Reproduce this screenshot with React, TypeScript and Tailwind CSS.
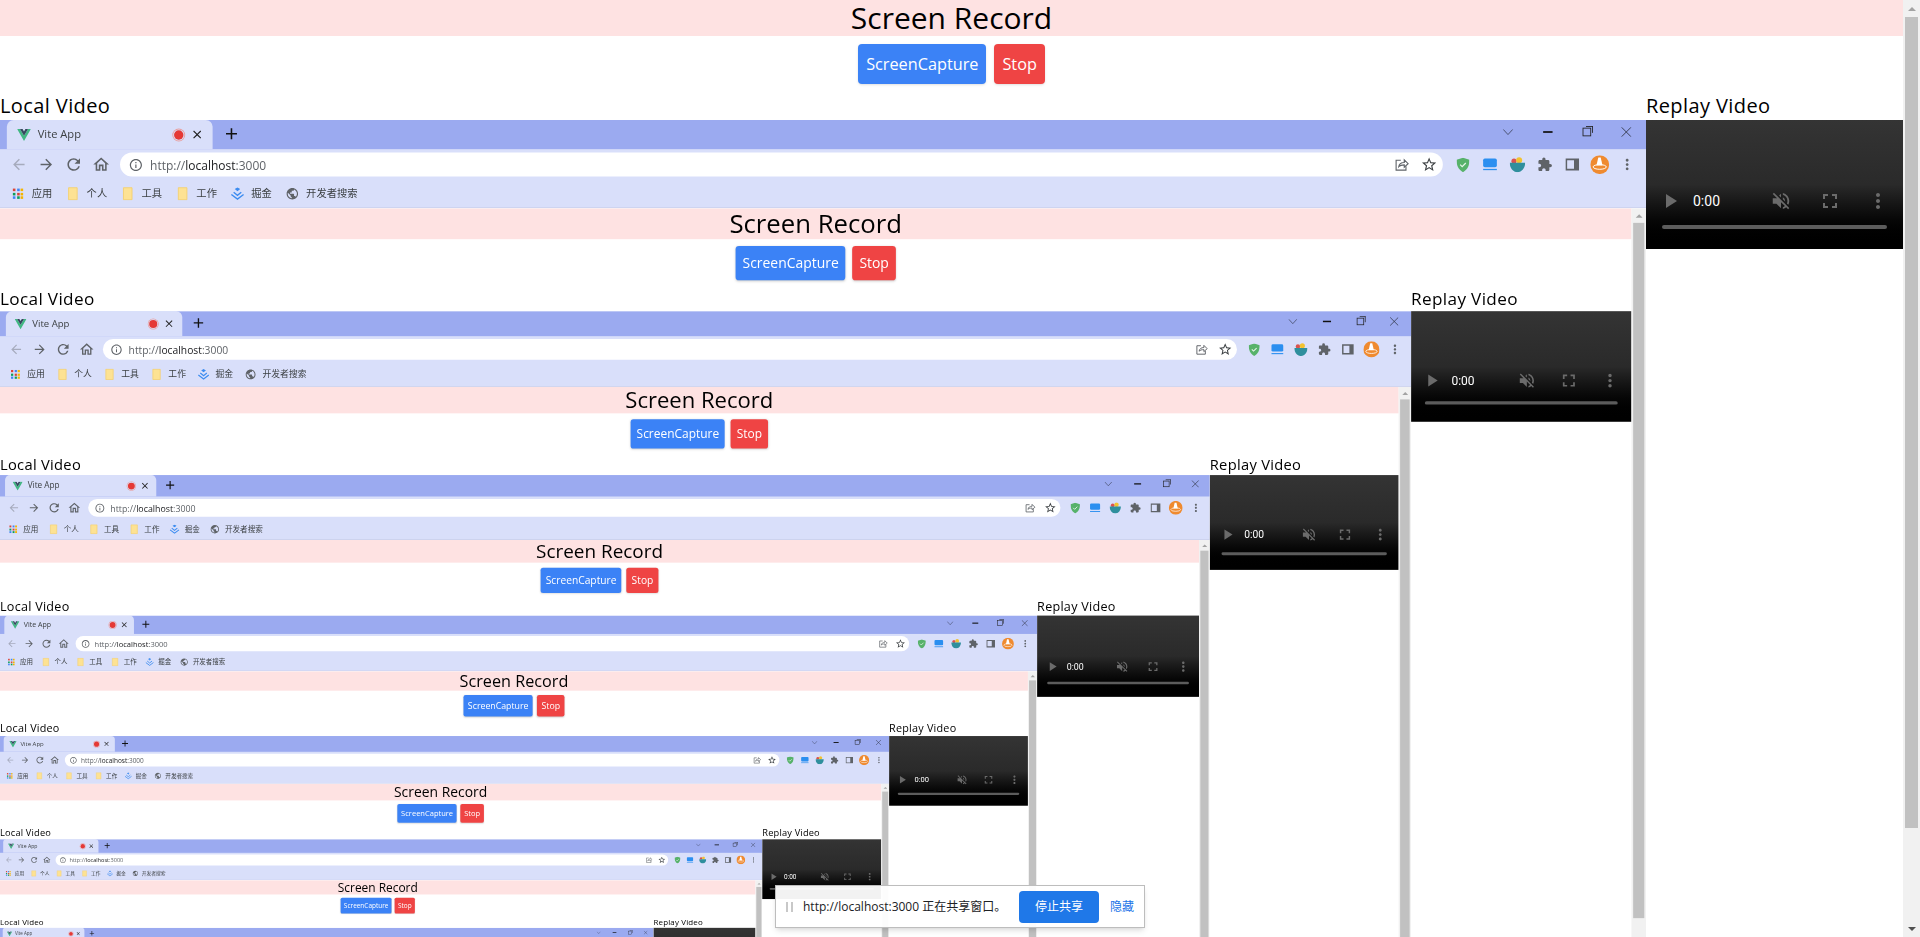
import {
  MdArrowBack,
  MdArrowForward,
  MdRefresh,
  MdOutlineHome,
  MdInfoOutline,
  MdStarBorder,
  MdExtension,
  MdPublic,
  MdPlayArrow,
  MdVolumeOff,
  MdFullscreen,
  MdMoreVert,
  MdClose,
  MdAdd,
} from 'react-icons/md';

const MAX_DEPTH = 8;

const VueLogo = () => (
  <svg viewBox="0 0 24 21" className="w-4 h-[15px]">
    <path d="M0 0h5l7 12L19 0h5L12 21z" fill="#41b883" />
    <path d="M5 0h4.500l2.500 4.500L14.500 0H19l-7 12z" fill="#35495e" />
  </svg>
);

const ShareIcon = () => (
  <svg viewBox="0 0 18 18" className="w-[18px] h-[18px]" fill="none" stroke="#5f6368" strokeWidth="1.3">
    <path d="M8 4H2.500v11.500H14V11" />
    <path d="M5.500 11.500c.5-3.500 3-5 6.500-5V3.500l4.500 4.500-4.500 4V9.300c-3 0-5 .6-6.500 2.200z" />
  </svg>
);

const ShieldIcon = () => (
  <svg viewBox="0 0 16 18" className="w-[15px] h-[17px]">
    <path d="M8 0l8 2.500c0 7-2 12-8 15.500C2 14.500 0 9.500 0 2.500z" fill="#57b26a" />
    <path d="M4.500 8.500l2.500 2.500 4.500-4.500" fill="none" stroke="#e6f5e9" strokeWidth="1.500" />
  </svg>
);

const TabsIcon = () => (
  <svg viewBox="0 0 18 16" className="w-[18px] h-4">
    <rect x="1" y="1" width="16" height="10" rx="2" fill="#2b8ff0" />
    <rect x="1" y="13" width="16" height="1.500" fill="#2b8ff0" />
  </svg>
);

const BowlIcon = () => (
  <svg viewBox="0 0 18 18" className="w-[18px] h-[18px]">
    <circle cx="5" cy="5" r="3" fill="#d9534f" />
    <circle cx="11" cy="4" r="3.500" fill="#f2c230" />
    <path d="M0 7h18c0 6-4 11-9 11S0 13 0 7z" fill="#2f8f9d" />
  </svg>
);

const SidebarIcon = () => (
  <svg viewBox="0 0 16 16" className="w-4 h-4">
    <path d="M0 1h16v14H0z" fill="#5f6368" />
    <path d="M2 3h8v10H2z" fill="#d9dffa" />
  </svg>
);

const AvatarIcon = () => (
  <svg viewBox="0 0 20 20" className="w-[22px] h-[22px]">
    <circle cx="10" cy="10" r="10" fill="#ef8a2f" />
    <path d="M8.500 2.500h2.500l2 8.500H6.500z" fill="#fff" />
    <ellipse cx="10" cy="12.500" rx="7" ry="2.500" fill="none" stroke="#fff" strokeWidth="1" />
  </svg>
);

const FolderIcon = () => (
  <svg viewBox="0 0 12 16" className="w-4 h-4">
    <path d="M1 1h10v14H1z" fill="#fde293" stroke="#f5cf6b" strokeWidth="1" />
  </svg>
);

const AppsIcon = () => (
  <div className="grid grid-cols-3 gap-[1.5px] w-3 h-3 mx-0.5">
    {['#db4437', '#4285f4', '#f4b400', '#0f9d58', '#db4437', '#f4b400', '#4285f4', '#0f9d58', '#f4b400'].map(
      (color, i) => (
        <span key={i} className="w-[3px] h-[3px]" style={{ backgroundColor: color }} />
      ),
    )}
  </div>
);

const JuejinIcon = () => (
  <svg viewBox="0 0 18 16" className="w-4 h-4" fill="none" stroke="#3c8cf0" strokeWidth="1.800">
    <path d="M7 2l2-1.200L11 2 9 3.500z" fill="#3c8cf0" />
    <path d="M4 6l5 4 5-4" />
    <path d="M1 9l8 6 8-6" />
  </svg>
);

const Bookmark = ({ icon, label }: { icon: React.ReactNode; label: string }) => (
  <div className="flex items-center gap-2 text-[12px] text-[#3c4043]">
    {icon}
    <span>{label}</span>
  </div>
);

const ToolButton = ({ children }: { children: React.ReactNode }) => (
  <div className="w-8 h-7 flex items-center justify-center shrink-0">{children}</div>
);

const BrowserChrome = () => (
  <div className="h-[103px] bg-[#d9dffa] border-b border-[#c5cbe8] font-['Open_Sans','Noto_Sans_CJK_SC',sans-serif]">
    <div className="h-[34px] bg-[#9baaf0] flex">
      <div className="ml-2 w-[240px] h-[34px] bg-[#d9dffa] rounded-t-lg flex items-center pl-3 pr-2.5">
        <VueLogo />
        <span className="ml-2 text-[13px] text-[#3c4043]">Vite App</span>
        <span className="ml-auto w-[11px] h-[11px] rounded-full bg-[#e53935] ring-1 ring-offset-1 ring-[#e9a0a0] ring-offset-[#d9dffa] mr-2" />
        <MdClose className="w-4 h-4 text-[#222]" />
      </div>
      <div className="ml-2 w-7 h-8 flex items-center justify-center">
        <MdAdd className="w-[22px] h-[22px] text-[#111]" />
      </div>
      <div className="ml-auto flex h-7">
        <div className="w-[46px] flex items-center justify-center">
          <svg viewBox="0 0 12 8" className="w-3 h-2" fill="none" stroke="#3f4660" strokeWidth="1">
            <path d="M.5 1L6 7l5.500-6" />
          </svg>
        </div>
        <div className="w-[46px] flex items-center justify-center">
          <span className="w-[11px] h-[1.500px] bg-[#111]" />
        </div>
        <div className="w-[46px] flex items-center justify-center">
          <span className="relative w-2.5 h-2.5 border border-[#222]">
            <span className="absolute -top-[3px] -right-[3px] w-2 h-2 border-t border-r border-[#222]" />
          </span>
        </div>
        <div className="w-[46px] flex items-center justify-center">
          <svg viewBox="0 0 12 12" className="w-3 h-3" fill="none" stroke="#2c3140" strokeWidth="1">
            <path d="M.5.5l11 11M11.500.5l-11 11" />
          </svg>
        </div>
      </div>
    </div>
    <div className="h-[38px] flex items-center px-1.5 pb-0.5">
      <ToolButton><MdArrowBack className="w-5 h-5 text-[#a6abbd]" /></ToolButton>
      <ToolButton><MdArrowForward className="w-5 h-5 text-[#5f6368]" /></ToolButton>
      <ToolButton><MdRefresh className="w-[22px] h-[22px] text-[#5f6368]" /></ToolButton>
      <ToolButton><MdOutlineHome className="w-[22px] h-[22px] text-[#5f6368]" /></ToolButton>
      <div className="ml-1.5 mr-[7px] flex-1 h-7 bg-white rounded-full flex items-center pl-2.5 pr-1.5">
        <MdInfoOutline className="w-[17px] h-[17px] text-[#5f6368]" />
        <span className="ml-2 text-[14px] text-[#202124]">
          <span className="text-[#5f6368]">http://</span>localhost<span className="text-[#5f6368]">:3000</span>
        </span>
        <div className="ml-auto flex items-center gap-[13px]">
          <ShareIcon />
          <MdStarBorder className="w-5 h-5 text-[#3c4043]" />
        </div>
      </div>
      <ToolButton><ShieldIcon /></ToolButton>
      <ToolButton><TabsIcon /></ToolButton>
      <ToolButton><BowlIcon /></ToolButton>
      <ToolButton><MdExtension className="w-[18px] h-[18px] text-[#5f6368]" /></ToolButton>
      <ToolButton><SidebarIcon /></ToolButton>
      <ToolButton><AvatarIcon /></ToolButton>
      <ToolButton><MdMoreVert className="w-5 h-5 text-[#5f6368]" /></ToolButton>
    </div>
    <div className="h-[30px] flex items-center gap-4 pl-[13px] pb-0.5">
      <Bookmark icon={<AppsIcon />} label="应用" />
      <Bookmark icon={<FolderIcon />} label="个人" />
      <Bookmark icon={<FolderIcon />} label="工具" />
      <Bookmark icon={<FolderIcon />} label="工作" />
      <Bookmark icon={<JuejinIcon />} label="掘金" />
      <Bookmark icon={<MdPublic className="w-4 h-4 text-[#5f6368]" />} label="开发者搜索" />
    </div>
  </div>
);

const ReplayPlayer = () => (
  <div className="w-[257px] h-[129px] bg-gradient-to-b from-[#343434] via-[#2a2a2a] to-black flex flex-col justify-end px-2 pb-5 font-['Roboto',sans-serif]">
    <div className="flex items-center h-8 text-[#6b6b6b]">
      <MdPlayArrow className="w-6 h-6 ml-1" />
      <span className="ml-[11px] text-[14px] text-white">0:00</span>
      <MdVolumeOff className="w-[22px] h-[22px] ml-[50px]" />
      <MdFullscreen className="w-6 h-6 ml-[26px]" />
      <MdMoreVert className="w-6 h-6 ml-6" />
    </div>
    <div className="mx-2 mt-2 h-1 rounded-full bg-[#5c5c5c]" />
  </div>
);

const Scrollbar = () => (
  <div className="w-[17px] h-full bg-[#f1f1f1] flex flex-col shrink-0">
    <div className="h-[17px] flex items-center justify-center">
      <span className="w-0 h-0 border-x-[4px] border-x-transparent border-b-[4px] border-b-[#a3a3a3]" />
    </div>
    <div className="ml-0.5 w-[13px] h-[811px] bg-[#c1c1c1]" />
    <div className="mt-auto h-[17px] flex items-center justify-center">
      <span className="w-0 h-0 border-x-[4px] border-x-transparent border-t-[4px] border-t-[#505050]" />
    </div>
  </div>
);

const Page = ({ depth }: { depth: number }) => (
  <div className="w-[1920px] h-[937px] flex bg-white text-black overflow-hidden font-['Open_Sans','Noto_Sans_CJK_SC',sans-serif]">
    <div className="w-[1903px] shrink-0">
      <h1 className="bg-[#fee2e2] text-3xl text-center">Screen Record</h1>
      <div className="flex justify-center gap-2 py-2">
        <button className="bg-[#3b82f6] text-white text-[16.25px] leading-7 px-2 py-1.5 rounded shadow">ScreenCapture</button>
        <button className="bg-[#ef4444] text-white text-[16.25px] leading-7 px-2 py-1.5 rounded shadow">Stop</button>
      </div>
      <div className="flex">
        <div className="w-[1646px] shrink-0">
          <div className="text-xl tracking-[0.4px]">Local Video</div>
          <div className="w-[1646px] h-[892px] overflow-hidden blur-[0.4px]">
            {depth < MAX_DEPTH && (
              <div className="w-[1920px] h-[1040px] origin-top-left scale-[0.8573]">
                <BrowserChrome />
                <Page depth={depth + 1} />
              </div>
            )}
          </div>
        </div>
        <div>
          <div className="text-xl tracking-[0.4px]">Replay Video</div>
          <ReplayPlayer />
        </div>
      </div>
    </div>
    <Scrollbar />
  </div>
);

const App = () => (
  <div className="relative w-[1920px] h-[937px] overflow-hidden">
    <Page depth={0} />
    <div className="absolute left-[775px] top-[885px] w-[370px] h-[43px] bg-white/95 border border-[#bdbdbd] shadow-md flex items-center pl-[10px] whitespace-nowrap font-['Open_Sans','Noto_Sans_CJK_SC',sans-serif] text-xs text-[#202124]">
      <span className="w-[7px] h-2.5 border-x-2 border-[#c8c8c8]" />
      <span className="ml-[10px]">http://localhost:3000 正在共享窗口。</span>
      <button className="ml-auto w-20 h-8 bg-[#1f78e8] text-white rounded">停止共享</button>
      <span className="ml-[11px] mr-[10px] text-[#1a73e8]">隐藏</span>
    </div>
  </div>
);

export default App;
